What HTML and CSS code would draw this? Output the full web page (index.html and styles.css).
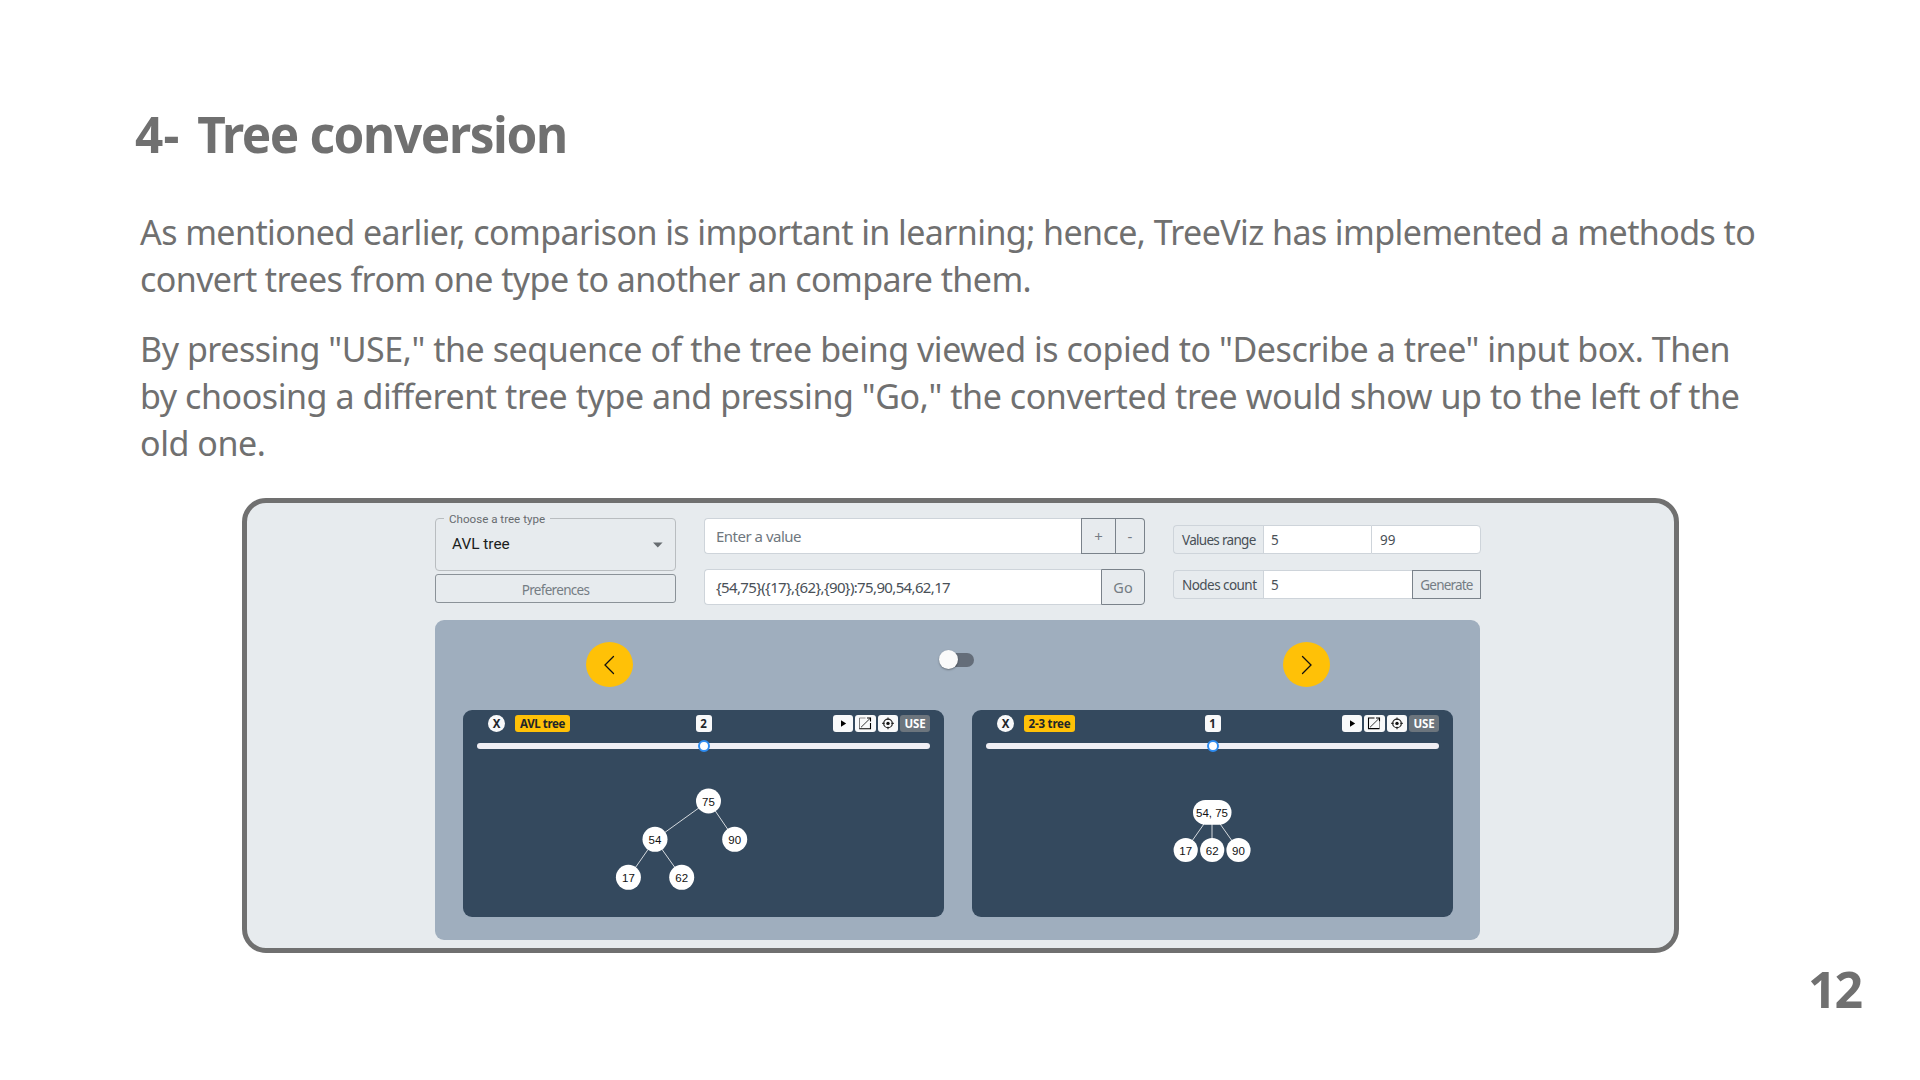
FILE: index.html
```html
<!DOCTYPE html>
<html lang="en">
<head>
<meta charset="utf-8">
<title>4- Tree conversion</title>
<link rel="stylesheet" href="styles.css">
</head>
<body>
<main class="slide">
  <h1 class="title"><span class="number">4-</span> Tree conversion</h1>
  <p class="copy">
    <span class="line line-a">As mentioned earlier, comparison is important in learning; hence, TreeViz has implemented a methods to</span>
    <span class="line line-b">convert trees from one type to another an compare them.</span>
  </p>
  <p class="copy">
    <span class="line line-c">By pressing "USE," the sequence of the tree being viewed is copied to "Describe a tree" input box. Then</span>
    <span class="line">by choosing a different tree type and pressing "Go," the converted tree would show up to the left of the</span>
    <span class="line">old one.</span>
  </p>

  <section class="shot">
    <div class="controls">
      <div class="col-type">
        <div class="select">
          <span class="select-label">Choose a tree type</span>
          <span class="select-value">AVL tree</span>
          <svg class="caret" viewBox="0 0 10 6"><path d="M0 .5h9.6L4.8 5.5z" fill="#676c70"/></svg>
        </div>
        <div class="prefs">Preferences</div>
      </div>
      <div class="col-input">
        <div class="group">
          <div class="field placeholder">Enter a value</div>
          <div class="btn plus">+</div>
          <div class="btn minus">-</div>
        </div>
        <div class="group">
          <div class="field seq">{54,75}({17},{62},{90}):75,90,54,62,17</div>
          <div class="btn go">Go</div>
        </div>
      </div>
      <div class="col-range">
        <div class="group small">
          <div class="tag tag-values">Values range</div>
          <div class="field first">5</div>
          <div class="field last">99</div>
        </div>
        <div class="group small">
          <div class="tag">Nodes count</div>
          <div class="field">5</div>
          <div class="btn generate">Generate</div>
        </div>
      </div>
    </div>

    <div class="board">
      <div class="nav">
        <div class="arrow arrow-prev"><svg viewBox="0 0 12 20"><path d="M10.5 1.5 2 10l8.500 8.500"/></svg></div>
        <div class="toggle"><span class="knob"></span></div>
        <div class="arrow arrow-next"><svg viewBox="0 0 12 20"><path d="M1.500 1.500 10 10l-8.500 8.500"/></svg></div>
      </div>
      <div class="trees">
        <article class="tree">
          <header class="head">
            <div class="left"><span class="close">X</span><span class="badge name">AVL tree</span></div>
            <span class="badge step">2</span>
            <div class="right">
              <span class="badge icon"><svg viewBox="0 0 20 17"><path d="M8 5.300v6.400l5.200-3.200z" fill="#000"/></svg></span>
              <span class="badge icon"><svg viewBox="0 0 20 17"><path d="M4.500 13.500v-10.500h6M4.500 3v10.500" fill="none" stroke="#777" stroke-width=".8"/><path d="M4.300 13.700h11.200V8M15.500 6.500V3h-3.500" fill="none" stroke="#000" stroke-width="1.100"/><path d="M6 12.300 15.200 3.300" stroke="#222" stroke-width=".9"/></svg></span>
              <span class="badge icon"><svg viewBox="0 0 20 17"><circle cx="10" cy="8.400" r="4.300" fill="none" stroke="#222" stroke-width="1.200"/><circle cx="10" cy="8.400" r="1.700" fill="#111"/><path d="M10 2.600v2.400M10 11.800v2.400M4.200 8.400h2.400M13.400 8.400h2.400" stroke="#222" stroke-width="1.100"/></svg></span>
              <span class="badge use">USE</span>
            </div>
          </header>
          <div class="slider"><span class="thumb"></span></div>
          <svg class="graph" viewBox="0 0 481 160">
            <g class="edges"><path d="M245.500 44 192 82.500M245.500 44 271.700 82.500M192 82.500l-26.500 38M192 82.500l27 38"/></g>
            <g class="nodes"><circle cx="245.500" cy="44" r="12.500"/><circle cx="192" cy="82.300" r="12.500"/><circle cx="271.700" cy="82.300" r="12.500"/><circle cx="165.400" cy="120.300" r="12.500"/><circle cx="218.700" cy="120.300" r="12.500"/></g>
            <g class="labels"><text x="245.500" y="49">75</text><text x="192" y="87">54</text><text x="271.700" y="87">90</text><text x="165.400" y="125">17</text><text x="218.700" y="125">62</text></g>
          </svg>
        </article>
        <article class="tree">
          <header class="head">
            <div class="left"><span class="close">X</span><span class="badge name name-23">2-3 tree</span></div>
            <span class="badge step">1</span>
            <div class="right">
              <span class="badge icon"><svg viewBox="0 0 20 17"><path d="M8 5.300v6.400l5.200-3.200z" fill="#000"/></svg></span>
              <span class="badge icon"><svg viewBox="0 0 20 17"><path d="M15.500 13.500V7" fill="none" stroke="#777" stroke-width=".8"/><path d="M10.500 3h-6v10.600h11M15.500 6.500V3h-3.500" fill="none" stroke="#000" stroke-width="1.100"/><path d="M6 12.300 15.200 3.300" stroke="#222" stroke-width=".9"/></svg></span>
              <span class="badge icon"><svg viewBox="0 0 20 17"><circle cx="10" cy="8.400" r="4.300" fill="none" stroke="#222" stroke-width="1.200"/><circle cx="10" cy="8.400" r="1.700" fill="#111"/><path d="M10 2.600v2.400M10 11.800v2.400M4.200 8.400h2.400M13.400 8.400h2.400" stroke="#222" stroke-width="1.100"/></svg></span>
              <span class="badge use">USE</span>
            </div>
          </header>
          <div class="slider"><span class="thumb"></span></div>
          <svg class="graph" viewBox="0 0 481 160">
            <g class="edges"><path d="M240 55.500 213.700 93M240 55.500V93M240 55.500 266.500 93"/></g>
            <g class="nodes"><rect x="221" y="43" width="38.500" height="24.700" rx="12.300"/><circle cx="213.700" cy="93" r="12.100"/><circle cx="240.200" cy="93" r="12.100"/><circle cx="266.500" cy="93" r="12.100"/></g>
            <g class="labels"><text x="240" y="60" letter-spacing="0">54, 75</text><text x="213.700" y="97.700">17</text><text x="240.200" y="97.700">62</text><text x="266.500" y="97.700">90</text></g>
          </svg>
        </article>
      </div>
    </div>
  </section>

  <footer class="page">12</footer>
</main>
</body>
</html>
```
FILE: styles.css
```css
* { box-sizing: border-box; }

body {
  margin: 0;
  background: #fff;
  color: #707070;
  font-family: "Noto Sans", "Open Sans", sans-serif;
}

.slide {
  width: 1920px;
  height: 1080px;
  overflow: hidden;
  display: flex;
  flex-direction: column;
}

.title {
  margin: 100px 0 0 135px;
  font-size: 49.5px;
  line-height: 68px;
  font-weight: 700;
  letter-spacing: -1.4px;
}
.number { margin-right: 6px; letter-spacing: 0.3px; }

.copy {
  margin: 0 0 23px 140px;
  font-size: 34px;
  line-height: 47px;
  letter-spacing: -0.435px;
}
.title + .copy { margin-top: 41px; }
.line { display: block; white-space: nowrap; }
.line-a { letter-spacing: -0.575px; }
.line-b { letter-spacing: -0.58px; }
.line-c { letter-spacing: -0.46px; }

.shot {
  width: 1437px;
  height: 455px;
  margin: 8px 0 0 242px;
  padding: 15px 0 0 188px;
  border: 5px solid #707070;
  border-radius: 24px;
  background: #e7ebee;
}

.controls {
  display: grid;
  grid-template-columns: 241px 441px 308px;
  gap: 28px;
  height: 102px;
}

.select {
  position: relative;
  display: flex;
  justify-content: space-between;
  height: 53px;
  padding: 0 12px 0 16px;
  border: 1px solid #b9bdc0;
  border-radius: 4px;
  font-family: Roboto, sans-serif;
}
.select-label {
  position: absolute;
  left: 8px;
  top: -9px;
  padding: 0 5px;
  background: #e7ebee;
  color: #676c70;
  font-size: 11.6px;
  line-height: 18px;
}
.select-value {
  color: #1c1e20;
  font-size: 15.4px;
  line-height: 51px;
}
.caret { width: 10px; height: 6px; margin-top: 23px; }

.prefs {
  height: 29px;
  margin-top: 3px;
  border: 1px solid #8b9298;
  border-radius: 3px;
  color: #757d84;
  font-size: 13.5px;
  line-height: 30px;
  letter-spacing: -0.7px;
  text-align: center;
}

.col-input { display: flex; flex-direction: column; gap: 15px; }
.col-range { display: flex; flex-direction: column; gap: 16px; padding-top: 7px; }

.group { display: flex; height: 36px; font-size: 15px; line-height: 34px; }
.field {
  flex: 1;
  padding-left: 11px;
  border: 1px solid #ced4da;
  border-right-width: 0;
  border-radius: 4px 0 0 4px;
  background: #fff;
  color: #495057;
}
.placeholder { color: #6f777e; letter-spacing: -0.5px; }
.seq { letter-spacing: -0.64px; }
.btn {
  border: 1px solid #7a828a;
  color: #757d84;
  text-align: center;
}
.plus { width: 35px; }
.minus { width: 29px; border-left: 0; border-radius: 0 4px 4px 0; }
.go { width: 44px; border-radius: 0 4px 4px 0; font-size: 14.5px; }

.small { height: 29px; font-size: 13.5px; line-height: 29px; }
.small .field { padding-left: 7px; border-radius: 0; }
.small .first { flex: 0 0 108px; }
.small .last { padding-left: 8px; border-right-width: 1px; border-radius: 0 4px 4px 0; }
.tag {
  width: 90px;
  padding-left: 8px;
  border: 1px solid #ced4da;
  border-right: 0;
  border-radius: 4px 0 0 4px;
  color: #495057;
  letter-spacing: -0.55px;
  white-space: nowrap;
}
.tag-values { letter-spacing: -0.7px; }
.generate { width: 69px; letter-spacing: -0.8px; }

.board {
  width: 1045px;
  height: 320px;
  padding: 0 27px 0 28px;
  border-radius: 9px;
  background: #9faebe;
}

.nav {
  display: grid;
  grid-template-columns: 483px 28px 1fr;
  height: 90px;
  padding-top: 22px;
}
.arrow {
  display: flex;
  align-items: center;
  justify-content: center;
  width: 47px;
  height: 45px;
  border-radius: 50%;
  background: #ffc107;
}
.arrow-prev { margin-left: 123px; padding-right: 2px; }
.arrow-next { margin-left: 309px; padding-left: 1px; }
.arrow svg { width: 12px; height: 20px; }
.arrow path { fill: none; stroke: #111; stroke-width: 1.3; stroke-linecap: round; }

.toggle {
  position: relative;
  height: 14px;
  margin-top: 11px;
  border-radius: 7px;
  background: #646d79;
}
.knob {
  position: absolute;
  left: -7px;
  top: -3px;
  width: 19px;
  height: 19px;
  border-radius: 50%;
  background: #fafafa;
  box-shadow: 0 1px 2px rgba(0, 0, 0, .35);
}

.trees { display: grid; grid-template-columns: 481px 481px; gap: 28px; }
.tree {
  height: 207px;
  padding-top: 5px;
  border-radius: 9px;
  background: #34495e;
}
.head {
  display: grid;
  grid-template-columns: 1fr 16px 1fr;
  height: 28px;
  padding: 0 14px;
}
.left { display: flex; gap: 10px; padding-left: 11px; }
.right { display: flex; gap: 2px; justify-content: flex-end; }

.close,
.badge {
  height: 17px;
  border-radius: 3px;
  background: #f8f9fa;
  color: #212529;
  font-size: 11.5px;
  font-weight: 700;
  line-height: 17px;
  text-align: center;
  white-space: nowrap;
}
.close { width: 17px; border-radius: 50%; }
.name { width: 55px; background: #ffc107; letter-spacing: -0.4px; }
.name-23 { width: 51px; letter-spacing: -0.2px; }
.icon { width: 20.5px; }
.icon svg { display: block; width: 20px; height: 17px; }
.use { width: 30px; background: #6c757d; color: #fff; letter-spacing: -0.2px; }

.slider {
  position: relative;
  height: 6px;
  margin: 0 14px;
  border-radius: 3px;
  background: #f0eff4;
}
.thumb {
  position: absolute;
  left: 221px;
  top: -3px;
  width: 12px;
  height: 12px;
  border: 2px solid #2e8cf0;
  border-radius: 50%;
  background: #fff;
}

.graph { display: block; width: 481px; height: 160px; margin-top: 8px; }
.edges path { fill: none; stroke: #d5dade; stroke-width: 1; }
.nodes { fill: #fff; }
.labels {
  fill: #111;
  font-family: "Liberation Sans", Arial, sans-serif;
  font-size: 11.5px;
  text-anchor: middle;
}

.page {
  margin: 1px 0 0 1808px;
  font-size: 50px;
  font-weight: 700;
  line-height: 70px;
  letter-spacing: -2px;
}
```
